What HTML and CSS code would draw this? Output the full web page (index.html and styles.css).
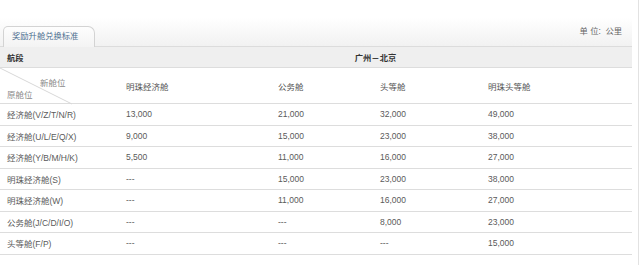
FILE: index.html
```html
<!DOCTYPE html>
<html lang="zh">
<head>
<meta charset="utf-8">
<link rel="stylesheet" href="styles.css">
</head>
<body>
<div class="panel">
  <div class="tabbar">
    <div class="tab">奖励升舱兑换标准</div>
    <div class="unit">单 位:&nbsp; 公里</div>
  </div>
  <table class="grid">
    <colgroup>
      <col class="c1"><col class="c2"><col class="c3"><col class="c4"><col class="c5">
    </colgroup>
    <tr class="route">
      <th class="left">航段</th>
      <th colspan="4" class="center">广州－北京</th>
    </tr>
    <tr class="head">
      <td class="diag">
        <svg class="diag-line" width="80" height="37" viewBox="0 0 80 37"><line x1="0" y1="0" x2="72" y2="36" stroke="#d8d8d8" stroke-width="1"/></svg>
        <span class="new">新舱位</span>
        <span class="old">原舱位</span>
      </td>
      <td>明珠经济舱</td><td>公务舱</td><td>头等舱</td><td>明珠头等舱</td>
    </tr>
    <tr><td>经济舱(V/Z/T/N/R)</td><td>13,000</td><td>21,000</td><td>32,000</td><td>49,000</td></tr>
    <tr><td>经济舱(U/L/E/Q/X)</td><td>9,000</td><td>15,000</td><td>23,000</td><td>38,000</td></tr>
    <tr><td>经济舱(Y/B/M/H/K)</td><td>5,500</td><td>11,000</td><td>16,000</td><td>27,000</td></tr>
    <tr><td>明珠经济舱(S)</td><td>---</td><td>15,000</td><td>23,000</td><td>38,000</td></tr>
    <tr><td>明珠经济舱(W)</td><td>---</td><td>11,000</td><td>16,000</td><td>27,000</td></tr>
    <tr><td>公务舱(J/C/D/I/O)</td><td>---</td><td>---</td><td>8,000</td><td>23,000</td></tr>
    <tr><td>头等舱(F/P)</td><td>---</td><td>---</td><td>---</td><td>15,000</td></tr>
  </table>
</div>
</body>
</html>
```

FILE: styles.css
```css
html, body {
  margin: 0;
  padding: 0;
  background: #ffffff;
}
body {
  font-family: "Liberation Sans", "Noto Sans CJK SC", sans-serif;
  font-size: 8.5px;
  color: #5a5a5a;
}
.panel {
  width: 638px;
  height: 265px;
  border-right: 1px solid #e2e2e2;
}
.tabbar {
  height: 47px;
  display: flex;
  align-items: flex-end;
  justify-content: space-between;
  background: linear-gradient(to bottom, #ffffff 0px, #ffffff 18px, #f1f1f1 47px);
  border-bottom: 1px solid #dcdcdc;
  box-sizing: border-box;
  width: 632px;
}
.tab {
  margin-left: 3px;
  width: 92px;
  height: 21px;
  box-sizing: border-box;
  border: 1px solid #d3d3d3;
  border-bottom: none;
  border-radius: 5px 7px 0 0;
  background: linear-gradient(to bottom, #fdfdfd, #f3f3f3);
  color: #4f7191;
  padding-left: 8px;
  line-height: 19px;
  font-size: 8.3px;
  margin-bottom: -1px;
}
.unit {
  align-self: flex-start;
  margin-top: 24px;
  margin-right: 10px;
  color: #666666;
  font-size: 8.3px;
}
.grid {
  width: 632px;
  border-collapse: collapse;
  table-layout: fixed;
}
.c1 { width: 119px; }
.c2 { width: 152px; }
.c3 { width: 102px; }
.c4 { width: 108px; }
.c5 { width: 151px; }
.grid td, .grid th {
  padding: 0 0 0 7px;
  text-align: left;
  white-space: nowrap;
  border-bottom: 1px solid #dddddd;
  height: 20.5px;
  vertical-align: middle;
}
.route th {
  background: #efefef;
  height: 20px;
  color: #333333;
  font-weight: bold;
  font-size: 8.3px;
}
.route th.center {
  text-align: center;
  padding: 0;
}
.head td {
  height: 35px;
  color: #555555;
}
.head td.diag {
  position: relative;
  padding: 0;
}
.diag-line {
  position: absolute;
  left: 0;
  top: 0;
}
.new {
  position: absolute;
  left: 40px;
  top: 8px;
  color: #8a8a8a;
}
.old {
  position: absolute;
  left: 7px;
  top: 20px;
  color: #8a8a8a;
}
```
